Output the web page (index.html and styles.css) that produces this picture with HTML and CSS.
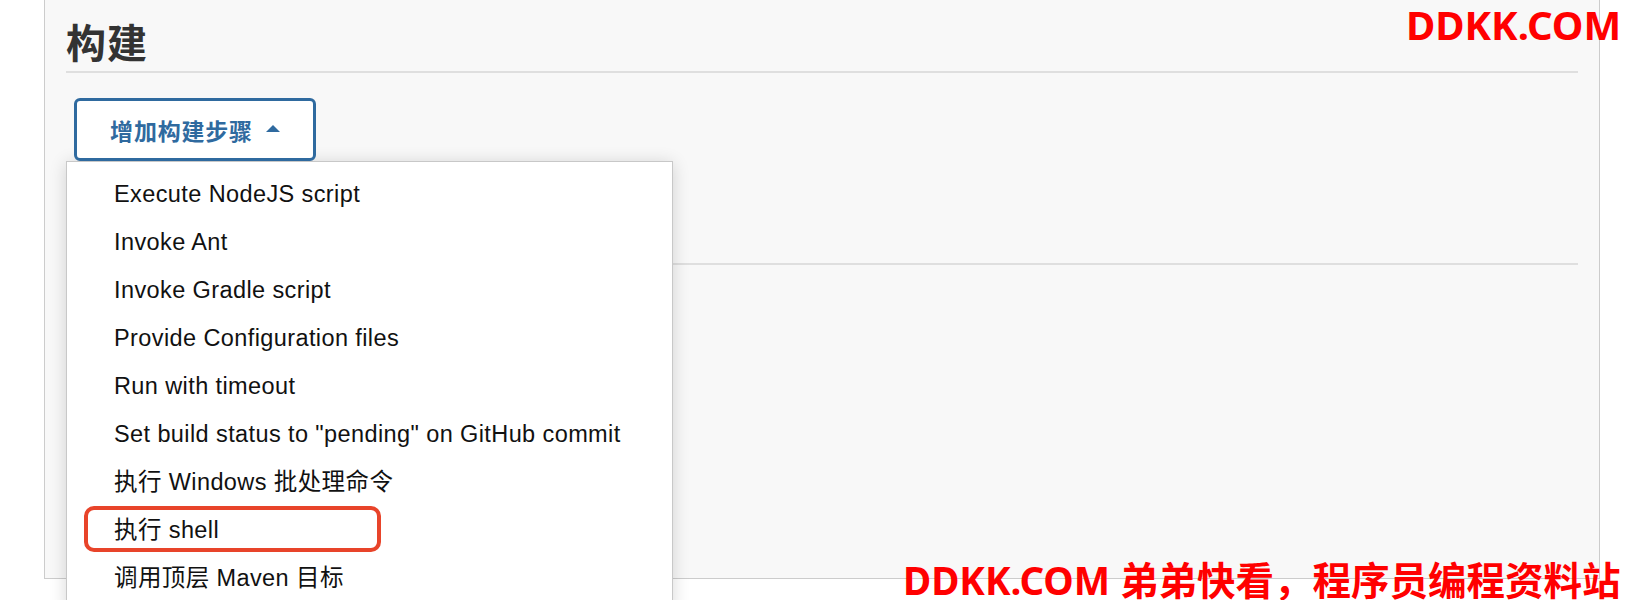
FILE: index.html
```html
<!DOCTYPE html>
<html lang="zh-CN">
<head>
<meta charset="utf-8">
<title>构建</title>
<link rel="stylesheet" href="styles.css">
</head>
<body>
<div class="page">
  <section class="panel">
    <h2 class="section-title">构建</h2>
    <div class="dropdown">
      <button class="add-btn" type="button">增加构建步骤<span class="caret"></span></button>
      <ul class="menu">
        <li class="menu-item">Execute NodeJS script</li>
        <li class="menu-item">Invoke Ant</li>
        <li class="menu-item">Invoke Gradle script</li>
        <li class="menu-item">Provide Configuration files</li>
        <li class="menu-item">Run with timeout</li>
        <li class="menu-item">Set build status to "pending" on GitHub commit</li>
        <li class="menu-item">执行 Windows 批处理命令</li>
        <li class="menu-item marked">执行 shell<span class="mark"></span></li>
        <li class="menu-item">调用顶层 Maven 目标</li>
      </ul>
    </div>
    <div class="divider"></div>
  </section>
  <div class="wm wm-top">DDKK.COM</div>
  <div class="wm wm-bottom">DDKK.COM 弟弟快看，程序员编程资料站</div>
</div>
</body>
</html>
```

FILE: styles.css
```css
html, body {
  margin: 0;
  padding: 0;
  height: 600px;
  overflow: hidden;
  background: #ffffff;
}

.page {
  position: relative;
  height: 600px;
  overflow: hidden;
  font-family: "Liberation Sans", "Noto Sans CJK SC", sans-serif;
}

.panel {
  margin-left: 44px;
  width: 1512px;
  height: 578px;
  padding: 0 21px;
  background: #f8f8f8;
  border: 1px solid #cccccc;
  border-top: none;
}

.section-title {
  margin: 0;
  padding-top: 19px;
  padding-bottom: 8px;
  line-height: 44px;
  font-family: "Noto Sans CJK SC", sans-serif;
  font-size: 40px;
  font-weight: 600;
  letter-spacing: 1px;
  color: #333333;
  border-bottom: 2px solid #dfdfdf;
}

.dropdown {
  position: relative;
  display: inline-block;
  margin-top: 25px;
  margin-left: 8px;
}

.add-btn {
  display: flex;
  align-items: center;
  justify-content: center;
  gap: 13px;
  width: 242px;
  height: 63px;
  padding: 0;
  background: #ffffff;
  border: 3px solid #2f6a9f;
  border-radius: 6px;
  color: #2f6a9f;
  font-family: "Noto Sans CJK SC", sans-serif;
  font-size: 23px;
  font-weight: 600;
  letter-spacing: 0.8px;
  position: relative;
  z-index: 2;
}

.caret {
  width: 0;
  height: 0;
  border-left: 7px solid transparent;
  border-right: 7px solid transparent;
  border-bottom: 7px solid #2f6a9f;
  margin-top: -2px;
}

.menu {
  position: absolute;
  top: 63px;
  left: -8px;
  width: 605px;
  margin: 0;
  padding: 8px 0;
  list-style: none;
  background: #ffffff;
  border: 1px solid #c8c8c8;
  box-shadow: 0 2px 16px rgba(0, 0, 0, 0.16);
  z-index: 1;
}

.menu-item {
  position: relative;
  height: 48px;
  line-height: 49px;
  padding-left: 47px;
  font-size: 23.5px;
  letter-spacing: 0.4px;
  color: #111111;
  white-space: nowrap;
}

.mark {
  position: absolute;
  left: 17px;
  top: 0;
  width: 289px;
  height: 38px;
  border: 4.5px solid #e8442a;
  border-radius: 10px;
}

.divider {
  margin-top: 102px;
  border-top: 2px solid #dfdfdf;
}

.wm {
  position: absolute;
  font-family: "Noto Sans", "Noto Sans CJK SC", sans-serif;
  font-weight: 700;
  font-size: 40px;
  line-height: 1;
  color: #ff0000;
  white-space: nowrap;
  z-index: 5;
}

.wm-top {
  left: 1406px;
  top: 5px;
}

.wm-bottom {
  left: 903px;
  top: 561px;
  font-size: 38.5px;
}
```
